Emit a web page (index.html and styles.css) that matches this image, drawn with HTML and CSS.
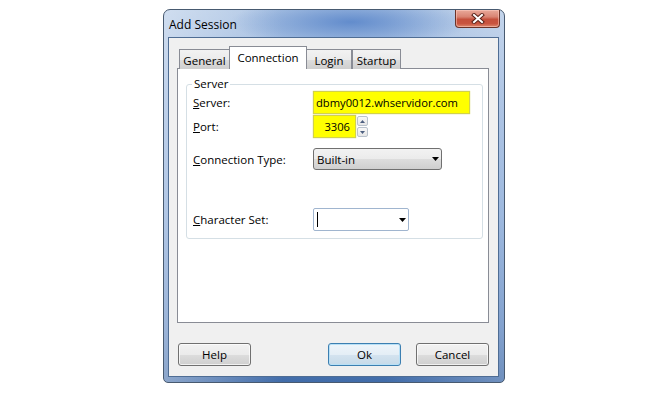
FILE: index.html
```html
<!DOCTYPE html>
<html>
<head>
<meta charset="utf-8">
<link rel="stylesheet" href="styles.css">
</head>
<body>
<div class="window">
  <div class="titlebar">
    <span class="title">Add Session</span>
    <div class="close">
      <svg width="14" height="11" viewBox="0 0 14 11">
        <path d="M3 2 L11 9 M11 2 L3 9" stroke="#5a2218" stroke-width="4" stroke-linecap="square" fill="none"/>
        <path d="M3 2 L11 9 M11 2 L3 9" stroke="#ffffff" stroke-width="2" stroke-linecap="square" fill="none"/>
      </svg>
    </div>
  </div>
  <div class="client">
    <div class="tabs">
      <div class="tab tab-general">General</div>
      <div class="tab tab-active">Connection</div>
      <div class="tab tab-login">Login</div>
      <div class="tab tab-startup">Startup</div>
    </div>
    <div class="panel">
      <div class="group">
        <span class="legend">Server</span>
        <div class="row row-server">
          <span class="label"><u>S</u>erver:</span>
          <div class="hl hl-server">dbmy0012.whservidor.com</div>
        </div>
        <div class="row row-port">
          <span class="label"><u>P</u>ort:</span>
          <div class="hl hl-port">3306</div>
          <div class="spin">
            <div class="spin-btn"><svg width="5" height="3" viewBox="0 0 5 3"><path d="M0 3 L2.5 0 L5 3 Z" fill="#4c5f80"/></svg></div>
            <div class="spin-btn"><svg width="5" height="3" viewBox="0 0 5 3"><path d="M0 0 L2.5 3 L5 0 Z" fill="#4c5f80"/></svg></div>
          </div>
        </div>
        <div class="row row-type">
          <span class="label"><u>C</u>onnection Type:</span>
          <div class="combo combo-type">
            <span>Built-in</span>
            <svg width="7" height="4" viewBox="0 0 7 4"><path d="M0 0 L7 0 L3.5 4 Z" fill="#000"/></svg>
          </div>
        </div>
        <div class="row row-charset">
          <span class="label"><u>C</u>haracter Set:</span>
          <div class="combo combo-charset">
            <span class="caret"></span>
            <svg width="7" height="4" viewBox="0 0 7 4"><path d="M0 0 L7 0 L3.5 4 Z" fill="#000"/></svg>
          </div>
        </div>
      </div>
    </div>
    <div class="buttons">
      <div class="btn btn-help">Help</div>
      <div class="btn btn-ok">Ok</div>
      <div class="btn btn-cancel">Cancel</div>
    </div>
  </div>
</div>
</body>
</html>
```
FILE: styles.css
```css
html, body {
  margin: 0;
  padding: 0;
  background: #ffffff;
}
body {
  width: 670px;
  height: 395px;
  overflow: hidden;
  font-family: "Open Sans", "Noto Sans", sans-serif;
  font-size: 11.5px;
  color: #000;
}
.window {
  box-sizing: border-box;
  margin: 9px 0 0 163px;
  width: 342px;
  height: 374px;
  border: 1px solid #485a70;
  border-radius: 7px 7px 5px 5px;
  padding: 0 5px 5px 4px;
  display: flex;
  flex-direction: column;
  background:
    radial-gradient(ellipse 120px 26px at 55% 12px, rgba(85,130,200,0.85), rgba(85,130,200,0)),
    linear-gradient(to right, rgba(255,255,255,0.4), rgba(255,255,255,0) 35%, rgba(255,255,255,0) 65%, rgba(255,255,255,0.25)),
    linear-gradient(to bottom, #b0c7e5 0%, #94b2dc 25%, #7ea2d4 55%, #5b84bf 85%, #416ca9 100%);
}
.titlebar {
  height: 27px;
  display: flex;
  justify-content: space-between;
  align-items: flex-start;
  flex-shrink: 0;
}
.title {
  margin-top: 6px;
  padding-left: 1px;
  font-size: 12px;
  color: #000;
}
.close {
  width: 45px;
  height: 18px;
  margin-right: -1px;
  box-sizing: border-box;
  border: 1px solid #6b3328;
  border-top: none;
  border-radius: 0 0 4px 4px;
  background: linear-gradient(to bottom, #e9a99a 0%, #d98473 40%, #c5503c 55%, #c9543f 80%, #dd8a70 100%);
  display: flex;
  align-items: center;
  justify-content: center;
  box-shadow: inset 0 0 0 1px rgba(255,210,200,0.5);
}
.client {
  flex: 1;
  box-sizing: border-box;
  border: 1px solid #4f6d94;
  background: #f0f0f0;
  padding: 9px 0 0 8px;
  display: flex;
  flex-direction: column;
}
.tabs {
  display: flex;
  align-items: flex-end;
  height: 22px;
  padding-left: 2px;
  position: relative;
  z-index: 2;
  margin-bottom: -1px;
}
.tab {
  box-sizing: border-box;
  height: 20px;
  border: 1px solid #898c95;
  border-bottom: none;
  background: linear-gradient(to bottom, #f2f2f2 0%, #ebebeb 50%, #dddddd 51%, #cfcfcf 100%);
  display: flex;
  align-items: center;
  justify-content: center;
  padding-top: 1px;
}
.tab-general { width: 51px; margin-right: -1px; }
.tab-active {
  width: 78px;
  height: 23px;
  background: #ffffff;
  padding-bottom: 3px;
  position: relative;
  z-index: 3;
}
.tab-login { width: 46px; margin-left: -1px; }
.tab-startup { width: 49px; margin-left: 0; }
.panel {
  box-sizing: border-box;
  width: 312px;
  height: 255px;
  border: 1px solid #898c95;
  background: #ffffff;
  padding: 15px 0 0 8px;
}
.group {
  box-sizing: border-box;
  position: relative;
  width: 297px;
  height: 155px;
  border: 1px solid #d5dfe5;
  border-radius: 3px;
  padding: 7px 0 0 6px;
}
.legend {
  position: absolute;
  top: -9px;
  left: 5px;
  padding: 0 2px;
  background: #ffffff;
  line-height: 16px;
}
.row {
  display: flex;
  align-items: center;
}
.label {
  width: 121px;
  flex-shrink: 0;
}
.row-port { margin-top: 3px; }
.row-type { margin-top: 11px; }
.row-charset { margin-top: 38px; }
.hl {
  box-sizing: border-box;
  height: 21px;
  background: #ffff00;
  box-shadow: 0 0 1px 1px rgba(190,190,0,0.7);
  display: flex;
  align-items: center;
  font-size: 11.2px;
}
.hl-server {
  width: 155px;
  padding-left: 2px;
}
.hl-port {
  width: 41px;
  justify-content: flex-end;
  padding-right: 5px;
}
.spin {
  margin-left: 2px;
  display: flex;
  flex-direction: column;
  gap: 1px;
}
.spin-btn {
  box-sizing: border-box;
  width: 11px;
  height: 10px;
  border: 1px solid #b9c2cc;
  border-radius: 2px;
  background: linear-gradient(to bottom, #f8f8f8, #e6e6e6);
  display: flex;
  align-items: center;
  justify-content: center;
}
.combo {
  box-sizing: border-box;
  margin-left: -1px;
  display: flex;
  align-items: center;
  justify-content: space-between;
}
.combo-type {
  width: 129px;
  height: 22px;
  border: 1px solid #707070;
  border-radius: 3px;
  background: linear-gradient(to bottom, #f2f2f2 0%, #ebebeb 50%, #dddddd 51%, #cfcfcf 100%);
  padding: 0 2px 0 3px;
}
.combo-charset {
  width: 96px;
  height: 23px;
  border: 1px solid #a0b5cf;
  border-radius: 2px;
  background: #ffffff;
  padding: 0 2px 0 3px;
}
.caret {
  display: block;
  width: 1px;
  height: 15px;
  background: #000;
}
.buttons {
  display: flex;
  margin-top: 20px;
  padding-left: 1px;
}
.btn {
  box-sizing: border-box;
  width: 73px;
  height: 23px;
  border: 1px solid #707070;
  border-radius: 3px;
  background: linear-gradient(to bottom, #f2f2f2 0%, #ebebeb 50%, #dddddd 51%, #cfcfcf 100%);
  display: flex;
  align-items: center;
  justify-content: center;
  box-shadow: inset 0 0 0 1px rgba(255,255,255,0.7);
}
.btn-ok {
  margin-left: 77px;
  border-color: #3c7fb1;
  background: linear-gradient(to bottom, #eef5fa 0%, #e4eef6 50%, #d4e3ef 51%, #c6dae9 100%);
  box-shadow: inset 0 0 0 1px #b8e0f6;
}
.btn-cancel {
  margin-left: 15px;
}
```
